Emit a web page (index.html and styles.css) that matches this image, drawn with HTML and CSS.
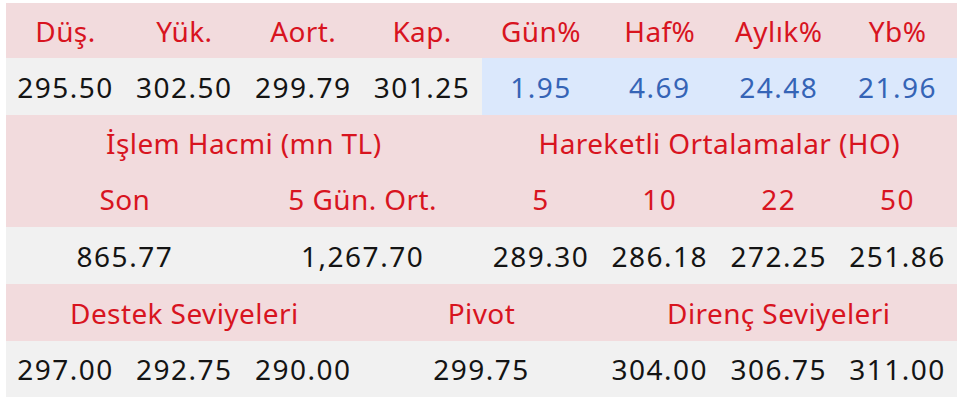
FILE: index.html
```html
<!DOCTYPE html>
<html lang="tr">
<head>
<meta charset="utf-8">
<link rel="stylesheet" href="styles.css">
</head>
<body>
<table class="stats">
  <colgroup>
    <col><col><col><col><col><col><col><col>
  </colgroup>
  <tr class="head r1">
    <td>Düş.</td><td>Yük.</td><td>Aort.</td><td>Kap.</td>
    <td>Gün%</td><td>Haf%</td><td>Aylık%</td><td>Yb%</td>
  </tr>
  <tr class="vals r2">
    <td>295.50</td><td>302.50</td><td>299.79</td><td>301.25</td>
    <td class="pct">1.95</td><td class="pct">4.69</td><td class="pct">24.48</td><td class="pct">21.96</td>
  </tr>
  <tr class="head r3">
    <td colspan="4">İşlem Hacmi (mn TL)</td>
    <td colspan="4">Hareketli Ortalamalar (HO)</td>
  </tr>
  <tr class="head r4">
    <td colspan="2">Son</td><td colspan="2">5 Gün. Ort.</td>
    <td class="num">5</td><td class="num">10</td><td class="num">22</td><td class="num">50</td>
  </tr>
  <tr class="vals r5">
    <td colspan="2">865.77</td><td colspan="2">1,267.70</td>
    <td>289.30</td><td>286.18</td><td>272.25</td><td>251.86</td>
  </tr>
  <tr class="head r6">
    <td colspan="3">Destek Seviyeleri</td><td colspan="2">Pivot</td><td colspan="3">Direnç Seviyeleri</td>
  </tr>
  <tr class="vals r7">
    <td>297.00</td><td>292.75</td><td>290.00</td><td colspan="2">299.75</td>
    <td>304.00</td><td>306.75</td><td>311.00</td>
  </tr>
</table>
</body>
</html>
```

FILE: styles.css
```css
html, body {
  margin: 0;
  padding: 0;
  background: #ffffff;
}

.stats {
  margin: 3px 0 0 6px;
  width: 951px;
  table-layout: fixed;
  border-collapse: collapse;
  border-spacing: 0;
  font-family: "Noto Sans", "Open Sans", sans-serif;
  font-size: 28px;
}

.stats td {
  padding: 0;
  text-align: center;
  vertical-align: middle;
  white-space: nowrap;
}

.head td {
  background: #f2dbdd;
  color: #d8141f;
  letter-spacing: 0.4px;
}

.head td.num {
  letter-spacing: 1.5px;
}

.vals td {
  background: #f1f1f1;
  color: #141414;
  letter-spacing: 1.5px;
}

.vals td.pct {
  background: #dbe8fc;
  color: #3564b6;
}

.r1 { height: 55px; }
.r2 { height: 57px; }
.r3 { height: 56px; }
.r4 { height: 56px; }
.r5 { height: 57px; }
.r6 { height: 57px; }
.r7 { height: 56px; }
```
